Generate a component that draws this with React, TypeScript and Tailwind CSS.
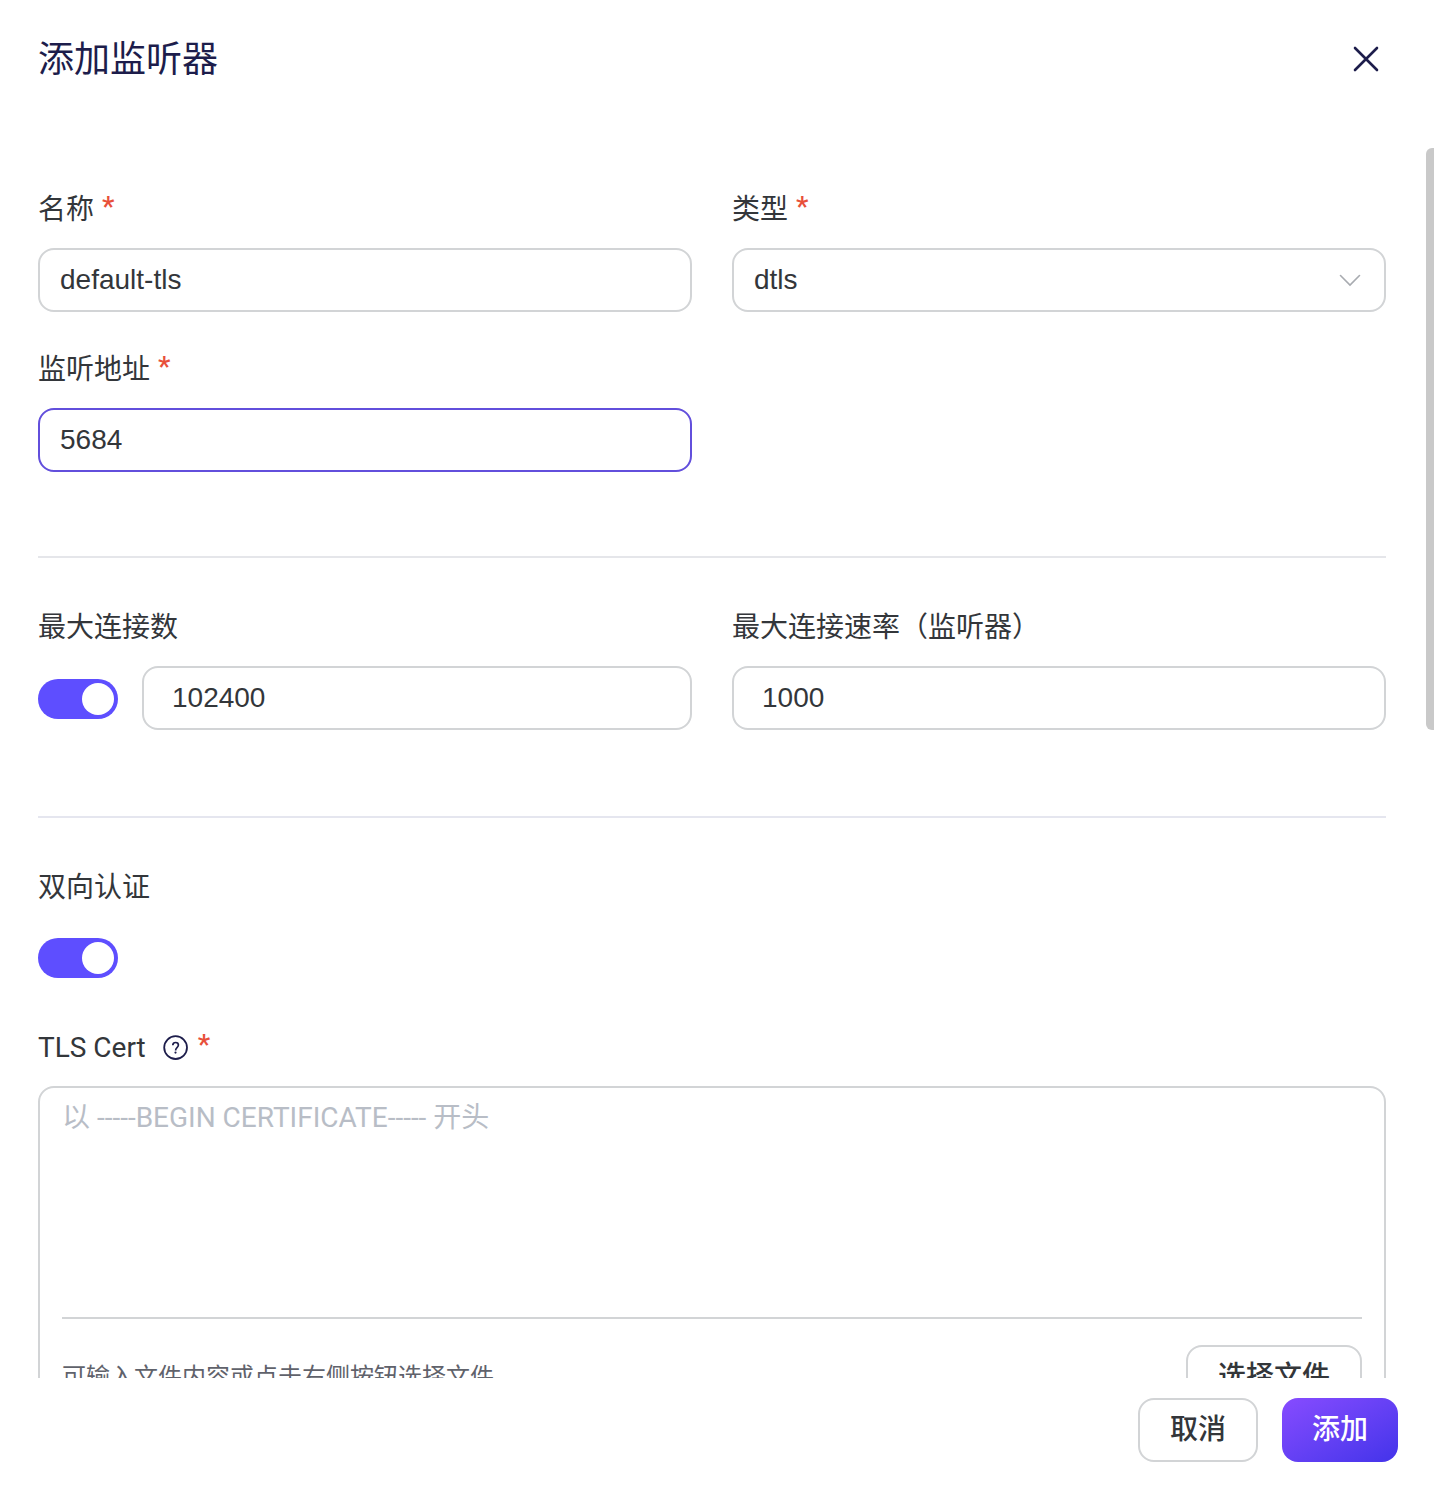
import { ReactNode, useState } from 'react';
import clsx from 'clsx';

interface FormItemProps {
  id: string;
  label: string;
  required?: boolean;
  help?: boolean;
  children: ReactNode;
}

const inputClass =
  'h-16 w-full min-w-0 rounded-2xl border-2 bg-white font-["Liberation_Sans","Noto_Sans_CJK_SC",sans-serif] text-[28px] text-[#33363a] outline-none focus:border-[#624fdc]';

const plainButtonClass =
  'h-16 shrink-0 rounded-2xl border-2 border-[#d2d4d6] bg-white px-[30px] text-[28px] font-medium text-[#33363a]';

function HelpIcon() {
  return (
    <svg className="ml-4 size-7" viewBox="0 0 28 28" fill="none" stroke="#1d1d4b" aria-hidden="true">
      <circle cx="13.600" cy="13.600" r="11.400" strokeWidth="1.800" />
      <path
        d="M10.800 11.200c0-1.700 1.100-2.700 2.800-2.700s2.800 1 2.800 2.600c0 1.200-.6 1.800-1.400 2.500-1 .9-1.400 1.400-1.400 2.900"
        strokeWidth="1.700"
      />
      <circle cx="13.500" cy="18.600" r="1.100" fill="#1d1d4b" stroke="none" />
    </svg>
  );
}

function FormItem({ id, label, required, help, children }: FormItemProps) {
  return (
    <div className="mb-9">
      <label htmlFor={id} className="mb-4 flex h-11 items-center text-[28px] leading-[44px]">
        {label}
        {help && <HelpIcon />}
        {required && <span className="ml-2 self-start leading-[38px] font-medium text-[#e8503a]">*</span>}
      </label>
      {children}
    </div>
  );
}

function Switch({ id, label }: { id: string; label?: string }) {
  const [checked, setChecked] = useState(true);

  return (
    <input
      id={id}
      type="checkbox"
      role="switch"
      aria-label={label}
      checked={checked}
      onChange={(e) => setChecked(e.target.checked)}
      className="h-10 w-20 shrink-0 cursor-pointer appearance-none rounded-full bg-[#c9ccd2] p-1 before:block before:size-8 before:rounded-full before:bg-white before:transition-transform checked:bg-[#5e4eff] checked:before:translate-x-10"
    />
  );
}

export default function App() {
  const [name, setName] = useState('default-tls');
  const [type, setType] = useState('dtls');
  const [bind, setBind] = useState('5684');
  const [maxConn, setMaxConn] = useState('102400');
  const [maxRate, setMaxRate] = useState('1000');
  const [cert, setCert] = useState('');
  const [activeField, setActiveField] = useState('bind');

  const borderOf = (field: string) => (activeField === field ? 'border-[#624fdc]' : 'border-[#d2d4d6]');

  return (
    <div className='flex h-screen flex-col bg-white font-[Roboto,"Noto_Sans_CJK_SC",sans-serif] text-[#33363a]'>
      <header className="flex h-[148px] shrink-0 items-start justify-between pt-9 pr-12 pl-[38px] text-[#1d1d4b]">
        <h1 className="text-[36px] leading-[48px]">添加监听器</h1>
        <button type="button" aria-label="关闭" className="flex h-12 w-10 items-center justify-center">
          <svg className="size-7 shrink-0" viewBox="0 0 28 28" fill="none" stroke="currentColor" aria-hidden="true">
            <path d="M3 2l22 22M25 2L3 24" strokeWidth="2.600" strokeLinecap="round" />
          </svg>
        </button>
      </header>

      <div className="relative min-h-0 flex-1">
        <form className="h-full overflow-y-auto pt-10 pr-12 pl-[38px] [scrollbar-width:none]">
          <div className="grid grid-cols-2 gap-x-10">
            <FormItem id="name" label="名称" required>
              <input
                id="name"
                className={clsx(inputClass, borderOf('name'), 'px-5')}
                value={name}
                onFocus={() => setActiveField('name')}
                onChange={(e) => setName(e.target.value)}
              />
            </FormItem>
            <FormItem id="type" label="类型" required>
              <div className="relative">
                <select
                  id="type"
                  className={clsx(inputClass, borderOf('type'), 'appearance-none px-5')}
                  value={type}
                  onFocus={() => setActiveField('type')}
                  onChange={(e) => setType(e.target.value)}
                >
                  <option>udp</option>
                  <option>dtls</option>
                </select>
                <svg
                  className="pointer-events-none absolute top-5 right-6 size-6"
                  viewBox="0 0 24 24"
                  fill="none"
                  stroke="#a8abb0"
                  aria-hidden="true"
                >
                  <path d="M2.500 7.500l9.500 9.500 9.500-9.500" strokeWidth="1.600" strokeLinecap="round" />
                </svg>
              </div>
            </FormItem>
            <FormItem id="bind" label="监听地址" required>
              <input
                id="bind"
                className={clsx(inputClass, borderOf('bind'), 'px-5')}
                value={bind}
                onFocus={() => setActiveField('bind')}
                onChange={(e) => setBind(e.target.value)}
              />
            </FormItem>
          </div>

          <hr className="my-12 border-t-2 border-[#e5e6ea]" />

          <div className="grid grid-cols-2 gap-x-10">
            <FormItem id="max-conn" label="最大连接数">
              <div className="flex h-[66px] items-start gap-6">
                <div className="flex h-full items-center">
                  <Switch id="limit-conn" label="启用最大连接数" />
                </div>
                <input
                  id="max-conn"
                  inputMode="numeric"
                  className={clsx(inputClass, borderOf('max-conn'), 'px-7')}
                  value={maxConn}
                  onFocus={() => setActiveField('max-conn')}
                  onChange={(e) => setMaxConn(e.target.value)}
                />
              </div>
            </FormItem>
            <FormItem id="max-rate" label="最大连接速率（监听器）">
              <input
                id="max-rate"
                inputMode="numeric"
                className={clsx(inputClass, borderOf('max-rate'), 'px-7')}
                value={maxRate}
                onFocus={() => setActiveField('max-rate')}
                onChange={(e) => setMaxRate(e.target.value)}
              />
            </FormItem>
          </div>

          <hr className="my-12 border-t-2 border-[#e5e6ef]" />

          <FormItem id="verify-peer" label="双向认证">
            <div className="flex h-16 items-center">
              <Switch id="verify-peer" />
            </div>
          </FormItem>

          <FormItem id="tls-cert" label="TLS Cert" required help>
            <div className="rounded-2xl border-2 border-[#d2d4d6] px-[22px] pb-6">
              <textarea
                id="tls-cert"
                className="block h-[231px] w-full resize-none border-b-2 border-[#d2d4d6] pt-2 text-[28px] leading-[44px] outline-none placeholder:text-[#b8bdc6]"
                placeholder="以 -----BEGIN CERTIFICATE----- 开头"
                value={cert}
                onChange={(e) => setCert(e.target.value)}
              />
              <div className="mt-[26px] flex items-center justify-between">
                <p className="text-2xl text-[#60626b]">可输入文件内容或点击右侧按钮选择文件</p>
                <button type="button" className={plainButtonClass}>
                  选择文件
                </button>
              </div>
            </div>
          </FormItem>
        </form>
        {/* scroll thumb */}
        <div className="absolute top-0 right-0 h-[582px] w-2 rounded-l-md bg-[#c9c9c9]" />
      </div>

      <footer className="flex h-[110px] shrink-0 items-start justify-end gap-6 pt-5 pr-9">
        <button type="button" className={plainButtonClass}>
          取消
        </button>
        <button
          type="button"
          className="h-16 rounded-2xl bg-linear-to-br from-[#874bff] to-[#4333ea] px-[30px] text-[28px] font-medium text-white"
        >
          添加
        </button>
      </footer>
    </div>
  );
}
